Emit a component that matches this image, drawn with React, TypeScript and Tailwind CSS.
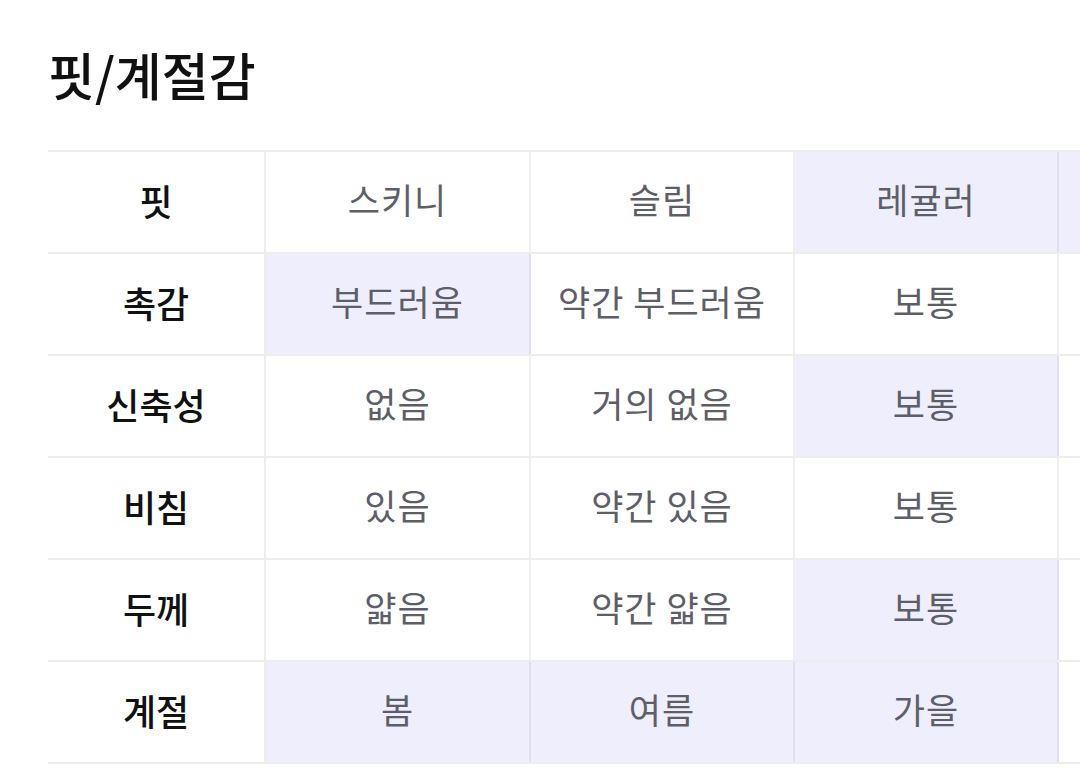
import React from "react";

type Cell = { text: string; on?: boolean };
type Row = { label: string; cells: Cell[] };

// 다섯 번째 열은 화면 밖으로 잘려서 보이는 건 배경색뿐
const ROWS: Row[] = [
  {
    label: "핏",
    cells: [
      { text: "스키니" },
      { text: "슬림" },
      { text: "레귤러", on: true },
      { text: "", on: true },
    ],
  },
  {
    label: "촉감",
    cells: [
      { text: "부드러움", on: true },
      { text: "약간 부드러움" },
      { text: "보통" },
      { text: "" },
    ],
  },
  {
    label: "신축성",
    cells: [
      { text: "없음" },
      { text: "거의 없음" },
      { text: "보통", on: true },
      { text: "" },
    ],
  },
  {
    label: "비침",
    cells: [
      { text: "있음" },
      { text: "약간 있음" },
      { text: "보통" },
      { text: "" },
    ],
  },
  {
    label: "두께",
    cells: [
      { text: "얇음" },
      { text: "약간 얇음" },
      { text: "보통", on: true },
      { text: "" },
    ],
  },
  {
    label: "계절",
    cells: [
      { text: "봄", on: true },
      { text: "여름", on: true },
      { text: "가을", on: true },
      { text: "" },
    ],
  },
];

const WIDTHS = ["w-[265px]", "w-[264px]", "w-[264px]", "w-[264px]"];

export default function App() {
  return (
    <div
      className="w-[1080px] h-[777px] overflow-hidden bg-white pl-[48px]"
      style={{ fontFamily: '"Noto Sans CJK KR", "Noto Sans", sans-serif' }}
    >
      <div className="h-[150px] flex items-center pb-[2px]">
        <h2 className="text-[51px] font-medium text-[#111] leading-none">
          핏/계절감
        </h2>
      </div>

      <div className="w-[1275px] border-t-2 border-[#00000012]">
        {ROWS.map((row) => (
          <div key={row.label} className="flex border-b-2 border-[#00000012]">
            <div className="w-[218px] shrink-0 h-[100px] pb-[5px] flex items-center justify-center border-r-2 border-[#00000012] text-[36px] font-medium text-[#111]">
              {row.label}
            </div>
            {row.cells.map((cell, i) => (
              <div
                key={i}
                className={`${WIDTHS[i]} shrink-0 h-[100px] pb-[5px] flex items-center justify-center border-r-2 border-[#00000010] text-[35px] tracking-[1px] text-[#5e5e68] ${cell.on ? "bg-[#efeefd]" : "bg-white"}`}
              >
                {cell.text}
              </div>
            ))}
          </div>
        ))}
      </div>
    </div>
  );
}
